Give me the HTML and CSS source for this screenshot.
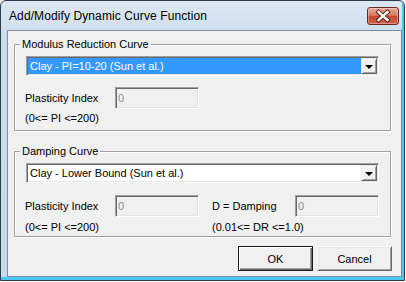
FILE: index.html
```html
<!DOCTYPE html>
<html lang="en">
<head>
    <meta charset="UTF-8">
    <meta name="viewport" content="width=device-width, initial-scale=1.0">
    <title>Add/Modify Dynamic Curve Function</title>
    <link rel="stylesheet" href="styles.css">
</head>
<body>
  <div class="window">
      <div class="titlebar">
          <span class="title">Add/Modify Dynamic Curve Function</span>
          <div class="close">
              <svg width="30" height="16" viewBox="0 0 30 16">
                  <path d="M10.5 4 L19.5 12 M19.5 4 L10.5 12" stroke="#4a1710" stroke-width="4.2" stroke-linecap="square"/>
                  <path d="M10.5 4 L19.5 12 M19.5 4 L10.5 12" stroke="#fff" stroke-width="2.4" stroke-linecap="square"/>
              </svg>
          </div>
      </div>
      <div class="client">
          <fieldset class="group group-modulus">
              <legend>Modulus Reduction Curve</legend>
              <div class="combo">
                  <span class="combo-text selected">Clay - PI=10-20 (Sun et al.)</span>
                  <span class="drop"><span class="arrow"></span></span>
              </div>
              <div class="grid fields">
                  <span class="label">Plasticity Index</span>
                  <span class="box">0</span>
              </div>
              <div class="grid ranges">
                  <span class="range">(0&lt;= PI &lt;=200)</span>
              </div>
          </fieldset>
          <fieldset class="group group-damping">
              <legend>Damping Curve</legend>
              <div class="combo">
                  <span class="combo-text">Clay - Lower Bound (Sun et al.)</span>
                  <span class="drop"><span class="arrow"></span></span>
              </div>
              <div class="grid fields">
                  <span class="label">Plasticity Index</span>
                  <span class="box">0</span>
                  <span class="label second">D = Damping</span>
                  <span class="box">0</span>
              </div>
              <div class="grid ranges">
                  <span class="range">(0&lt;= PI &lt;=200)</span>
                  <span class="range second">(0.01&lt;= DR &lt;=1.0)</span>
              </div>
          </fieldset>
          <div class="actions">
              <button class="btn btn-default">OK</button>
              <button class="btn">Cancel</button>
          </div>
      </div>
  </div>
</body>
</html>
```

FILE: styles.css
```css
body {
    margin: 0;
    background: #fff;
    font-family: "Liberation Sans", Arial, sans-serif;
    font-size: 11px;
    color: #000;
}

.window {
    width: 405px;
    height: 281px;
    box-sizing: border-box;
    display: flex;
    flex-direction: column;
    padding: 0 2px 3px 6px;
    border: 1px solid #2f3b4a;
    border-radius: 6px 6px 0 0;
    background: linear-gradient(#dce7f4, #cbdcee 40px, #c6d8eb);
    box-shadow: inset -2px -3px 0 #4cc6f2;
}

.titlebar {
    height: 29px;
    display: flex;
    align-items: center;
    justify-content: space-between;
    padding-left: 2px;
}

.title {
    font-size: 12px;
    letter-spacing: 0.1px;
}

.close {
    width: 32px;
    height: 18px;
    box-sizing: border-box;
    margin-right: 3px;
    border: 1px solid #6b2a20;
    border-radius: 3px;
    background: linear-gradient(#eaa898, #da7b67 45%, #c54a33 52%, #cf5f48);
    box-shadow: inset 0 0 0 1px rgba(255, 255, 255, 0.35);
    display: flex;
    align-items: center;
    justify-content: center;
}

.client {
    flex: 1;
    border: 1px solid #7b8ea5;
    background: #f0f0f0;
}

.group {
    margin: 7px 10px 0 6px;
    padding: 5px 10px 5px 10px;
    min-width: 0;
    border: 1px solid #a0a0a0;
    box-shadow: inset 1px 1px 0 #fff, 1px 1px 0 #fff;
}

.group-damping {
    margin-top: 14px;
    padding-bottom: 2px;
}

legend {
    margin-left: -5px;
    padding: 0 2px;
    line-height: 13px;
    background: #f0f0f0;
}

.combo {
    width: 353px;
    height: 20px;
    box-sizing: border-box;
    margin-left: 1px;
    display: flex;
    background: #fff;
    border: 1px solid;
    border-color: #a0a0a0 #fff #fff #a0a0a0;
    box-shadow: inset 1px 1px 0 #696969, inset -1px -1px 0 #e3e3e3;
    padding: 1px;
}

.combo-text {
    flex: 1;
    line-height: 16px;
    padding-left: 2px;
}

.selected {
    background: #3399ff;
    color: #fff;
}

.drop {
    width: 16px;
    height: 16px;
    box-sizing: border-box;
    display: flex;
    align-items: center;
    justify-content: center;
    background: #f0f0f0;
    border: 1px solid;
    border-color: #e3e3e3 #696969 #696969 #e3e3e3;
    box-shadow: inset 1px 1px 0 #fff, inset -1px -1px 0 #a0a0a0;
}

.arrow {
    width: 0;
    height: 0;
    border-left: 4px solid transparent;
    border-right: 4px solid transparent;
    border-top: 4px solid #000;
    margin-top: 1px;
}

.grid {
    display: grid;
    grid-template-columns: 90px 84px 13px 83px 84px;
    align-items: center;
}

.second {
    grid-column: 4;
}

.fields {
    margin-top: 11px;
}

.group-damping .fields {
    margin-top: 12px;
}

.ranges {
    margin-top: 3px;
    line-height: 13px;
}

.group-damping .ranges {
    margin-top: 4px;
}

.range {
    grid-column-end: span 2;
}

.range.second {
    grid-column: 4 / span 2;
}

.box {
    height: 22px;
    box-sizing: border-box;
    padding-left: 2px;
    line-height: 18px;
    color: #8d8d8d;
    background: #f0f0f0;
    border: 1px solid;
    border-color: #a0a0a0 #fff #fff #a0a0a0;
    box-shadow: inset 1px 1px 0 #696969, inset -1px -1px 0 #e3e3e3;
    padding-top: 1px;
}

.actions {
    display: flex;
    justify-content: flex-end;
    gap: 4px;
    margin: 9px 9px 0 0;
}

.btn {
    width: 75px;
    height: 25px;
    padding: 0;
    font-family: inherit;
    font-size: 11px;
    color: #000;
    background: #f0f0f0;
    border: 1px solid;
    border-color: #fff #696969 #696969 #fff;
    box-shadow: inset 1px 1px 0 #e3e3e3, inset -1px -1px 0 #a0a0a0;
}

.btn-default {
    border-color: #1a1a1a;
    box-shadow: inset 1px 1px 0 #fff, inset -1px -1px 0 #696969, inset -2px -2px 0 #a0a0a0;
}
```
